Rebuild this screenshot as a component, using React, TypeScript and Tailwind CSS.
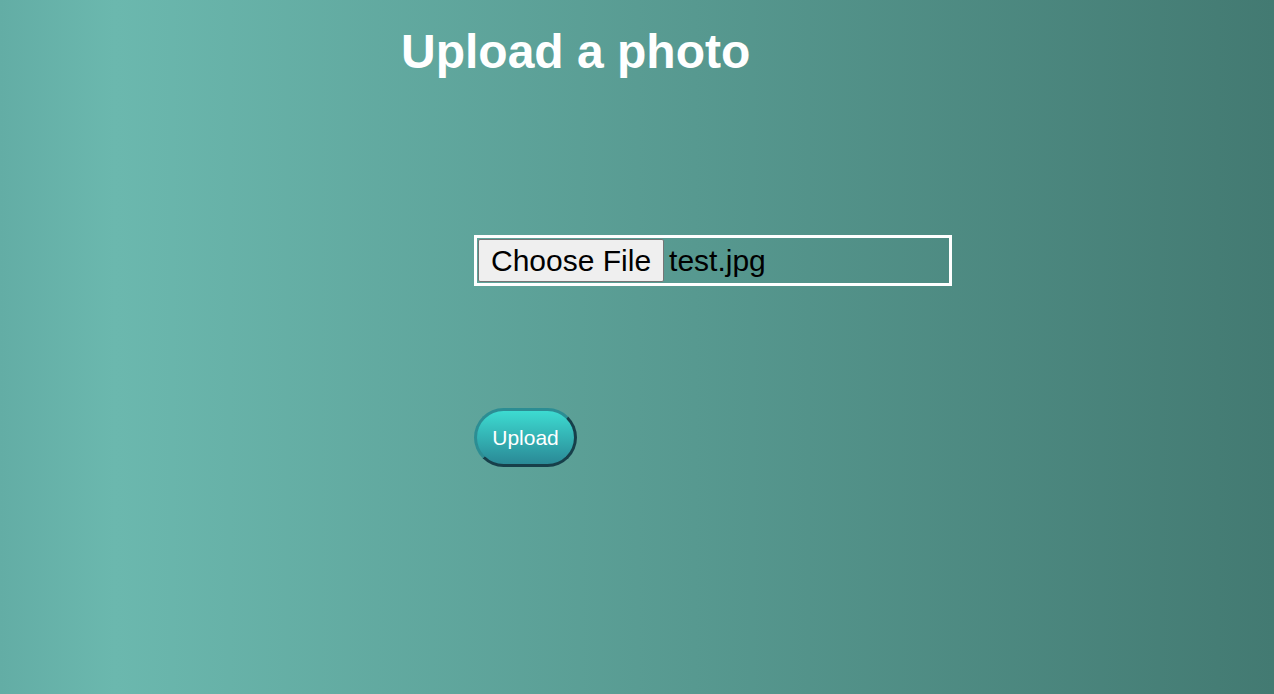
const App = () => {
  return (
    <div className="h-[694px] w-full overflow-hidden bg-[linear-gradient(to_right,#63ada5_0%,#6bb8ae_9%,#437a72_100%)] font-['Liberation_Sans',Arial,sans-serif]">
      <h1 className="pl-[401px] pt-[24px] text-[48px] font-bold leading-[55px] text-white">
        Upload a photo
      </h1>
      <div className="flex flex-col items-start pl-[474px]">
        <div className="mt-[156px] flex h-[51px] w-[478px] items-center border-[3px] border-white p-px">
          <button className="h-[43px] rounded-[2px] border border-[#767676] bg-[#efefef] px-[12px] text-[30px] leading-none text-black">
            Choose File
          </button>
          <span className="ml-[5px] text-[30px] leading-none text-black">test.jpg</span>
        </div>
        <button className="mt-[122px] h-[59px] w-[103px] rounded-full border-[3px] border-t-[#2c8d93] border-l-[#2c8d93] border-r-[#173f4a] border-b-[#173f4a] bg-[linear-gradient(to_bottom,#3ddbd1,#2a8996)] text-[21px] text-white">
          Upload
        </button>
      </div>
    </div>
  );
};

export default App;
